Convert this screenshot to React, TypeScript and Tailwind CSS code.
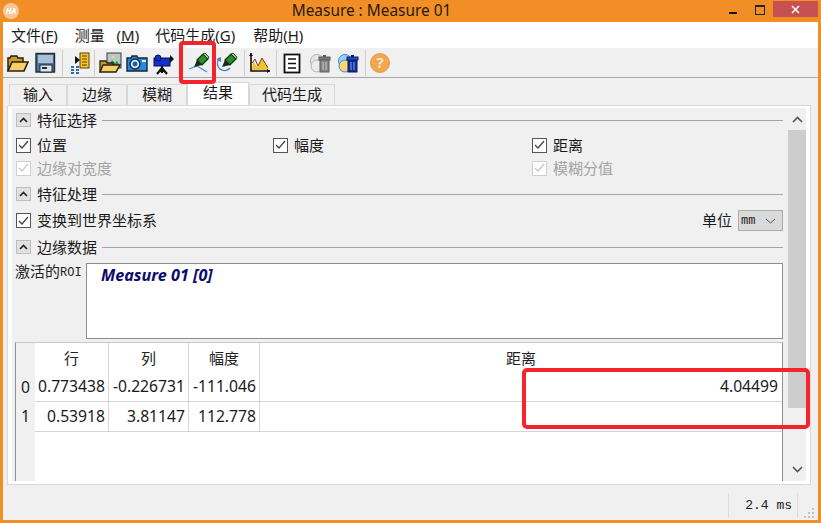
import type { ReactNode } from "react"

const cjk = "font-['Noto_Sans','Noto_Sans_CJK_SC',sans-serif]"
const mono = "font-['Liberation_Mono',monospace]"

function OpenIcon() {
  return (
    <svg width="24" height="24" viewBox="0 0 24 24">
      <path d="M3 20V7h2l1-2h6l1 2h5v4" fill="#c99a2e" stroke="#2a2110" strokeWidth="1.5" />
      <path d="M3 20l4-9h16l-4 9z" fill="#f6d066" stroke="#2a2110" strokeWidth="1.6" />
    </svg>
  )
}

function SaveIcon() {
  return (
    <svg width="24" height="24" viewBox="0 0 24 24">
      <rect x="4" y="2.5" width="18.5" height="18.5" fill="#4f7396" stroke="#1d2b3a" strokeWidth="1.4" />
      <rect x="6" y="4" width="15" height="8" fill="#a9bfd3" />
      <rect x="8" y="14" width="12" height="7" fill="#dde6ee" stroke="#1d2b3a" />
      <rect x="10" y="16" width="5" height="2" fill="#1d2b3a" />
    </svg>
  )
}

function RoiIcon() {
  return (
    <svg width="24" height="24" viewBox="0 0 24 24">
      <rect x="11" y="2" width="9" height="15" fill="#f4c52d" stroke="#5a4300" />
      <path d="M13 5h5M13 8h5M13 11h5M13 14h5" stroke="#5a4300" />
      <path d="M6 5l5 4-5 4z" fill="#111" />
      <g fill="#2f6db0">
        <rect x="2" y="15" width="3" height="2" />
        <rect x="7" y="15" width="3" height="2" />
        <rect x="2" y="18" width="3" height="2" />
        <rect x="7" y="18" width="3" height="2" />
        <rect x="2" y="21" width="3" height="2" />
        <rect x="7" y="21" width="3" height="2" />
      </g>
    </svg>
  )
}

function PictureFolderIcon() {
  return (
    <svg width="24" height="24" viewBox="0 0 24 24">
      <rect x="9" y="2" width="14" height="15" fill="#b9c4cf" stroke="#3d3d3d" />
      <path d="M10 16l4-7 3 3 2-2 4 6z" fill="#1f9a35" />
      <circle cx="15" cy="6" r="1.6" fill="#e9dc6f" />
      <path d="M2 21V10h6l1 2h6v3" fill="#c99a2e" stroke="#2a2110" strokeWidth="1.3" />
      <path d="M2 21l3-7h17l-4 7z" fill="#f6d066" stroke="#2a2110" strokeWidth="1.5" />
    </svg>
  )
}

function CameraIcon() {
  return (
    <svg width="24" height="24" viewBox="0 0 24 24">
      <path d="M3 7h4l1-2h5l1 2h9v13H3z" fill="#2a8ad8" stroke="#10263f" strokeWidth="1.4" />
      <circle cx="11" cy="13" r="5" fill="#cfe6f8" stroke="#10263f" strokeWidth="1.4" />
      <circle cx="11" cy="13" r="2.4" fill="#1b5f9e" />
      <rect x="18" y="9" width="4" height="2" fill="#d8ecfb" />
    </svg>
  )
}

function VideoIcon() {
  return (
    <svg width="24" height="24" viewBox="0 0 24 24">
      <rect x="3" y="7" width="16" height="8" fill="#1430c8" stroke="#071050" />
      <circle cx="7" cy="7" r="3" fill="#1430c8" stroke="#071050" />
      <path d="M19 4l4 4-4 4z" fill="#111" />
      <path d="M11 15v2M11 17l-5 6M11 17l5 6M11 17v5" stroke="#111" strokeWidth="2.2" />
    </svg>
  )
}

// small felt marker, tip at lower left
function Marker() {
  return (
    <g>
      <path d="M9 9l6-6 5 5-6 6z" fill="#2a8f2a" stroke="#0f300f" strokeWidth="1.2" />
      <path d="M15 3l2-1 4 4-1 2z" fill="#86d976" stroke="#0f300f" strokeWidth="0.8" />
      <path d="M9 9l5 5-8 2z" fill="#1e2a14" />
    </g>
  )
}

function PenLineIcon() {
  return (
    <svg width="24" height="24" viewBox="0 0 24 24">
      <path d="M1 18l8-3 10 6" fill="none" stroke="#4a90d9" strokeWidth="1.2" />
      <Marker />
    </svg>
  )
}

function PenCircleIcon() {
  return (
    <svg width="24" height="24" viewBox="0 0 24 24">
      <path d="M5 8a7 7 0 1 0 11 9" fill="none" stroke="#3f87d0" strokeWidth="1.4" />
      <path d="M2 8l5-2 0 5z" fill="#3f87d0" />
      <g transform="translate(2 0)">
        <Marker />
      </g>
    </svg>
  )
}

function ChartIcon() {
  return (
    <svg width="24" height="24" viewBox="0 0 24 24">
      <path d="M5 19l1-9 4 6 2-3 3-6 3 6 4 6z" fill="#f1c232" />
      <path d="M5 12l3-4 3 7 4-8 3 5 3 5" fill="none" stroke="#8c3b1e" />
      <path d="M4 2v18h19" fill="none" stroke="#111" strokeWidth="1.6" />
      <path d="M2 5l2-3 2 3zM20 18l3 2-3 2z" fill="#111" />
    </svg>
  )
}

function ListIcon() {
  return (
    <svg width="24" height="24" viewBox="0 0 24 24">
      <rect x="4.5" y="3.5" width="15" height="18" fill="#fff" stroke="#111" strokeWidth="1.8" />
      <path d="M8 8h8M8 12.5h8M8 17h8" stroke="#111" strokeWidth="1.6" />
    </svg>
  )
}

function TrashIcon({ color = false }: { color?: boolean }) {
  const body = color ? "#0f2f96" : "#858585"
  const edge = color ? "#0a1a5c" : "#5c5c5c"
  return (
    <svg width="24" height="24" viewBox="0 0 24 24">
      <circle cx="9" cy="10" r="6.5" fill={color ? "#9fd0f2" : "#e4e4e4"} stroke={color ? "#3b8edb" : "#b4b4b4"} />
      <circle cx="9" cy="15" r="6" fill={color ? "#f6d774" : "#ececec"} stroke={color ? "#3b8edb" : "#b4b4b4"} />
      <rect x="12" y="8" width="9" height="13" fill={body} stroke={edge} />
      <rect x="11" y="6" width="11" height="3" fill={color ? "#2450c0" : "#777"} stroke={edge} />
      <rect x="15" y="4" width="3" height="2" fill={edge} />
      <path d="M15 11v8M18 11v8" stroke={color ? "#7fa6ee" : "#c8c8c8"} />
    </svg>
  )
}

function Sep({ className }: { className: string }) {
  return <div className={`h-[26px] w-px bg-[#cfcfcf] ${className}`} />
}

function Tool({ className, children }: { className: string; children: ReactNode }) {
  return <div className={`flex h-6 w-6 items-center justify-center ${className}`}>{children}</div>
}

function MenuItem({ label, hot, className }: { label: string; hot: string; className: string }) {
  return (
    <span className={`text-[15px] whitespace-pre text-[#1a1a1a] ${className}`}>
      {label}(<span className="underline">{hot}</span>)
    </span>
  )
}

function Tab({ label, width, active }: { label: string; width: string; active?: boolean }) {
  return (
    <div
      className={`flex items-center justify-center border border-b-0 border-[#d9d9d9] text-[15px] text-[#1a1a1a] ${width} ${
        active ? "h-[23px] bg-white pb-[3px]" : "h-[21px] bg-[#f0f0f0] pb-px"
      }`}
    >
      {label}
    </div>
  )
}

function SectionHeader({ title, className }: { title: string; className: string }) {
  return (
    <div className={`ml-px flex items-center ${className}`}>
      <div className="flex h-[14px] w-[15px] items-center justify-center border border-[#bdbdbd] bg-[#e1e1e1]">
        <svg width="9" height="6" viewBox="0 0 9 6">
          <path d="M1 5l3.5-3.5L8 5" fill="none" stroke="#222" strokeWidth="1.6" />
        </svg>
      </div>
      <span className="ml-[6px] text-[15px] text-[#1a1a1a]">{title}</span>
      <div className="ml-[5px] h-px flex-1 bg-[#a6a6a6]" />
    </div>
  )
}

function Check({ label, disabled, width }: { label: string; disabled?: boolean; width?: string }) {
  return (
    <div className={`flex items-center ${width ?? ""}`}>
      <div
        className={`flex h-[15px] w-[15px] items-center justify-center border bg-white ${
          disabled ? "border-[#cfcfcf]" : "border-[#555]"
        }`}
      >
        <svg width="11" height="10" viewBox="0 0 11 10">
          <path d="M1 5l3 3 6-7" fill="none" stroke={disabled ? "#c8c8c8" : "#444"} strokeWidth="1.3" />
        </svg>
      </div>
      <span className={`ml-[6px] text-[15px] ${disabled ? "text-[#a3a3a3]" : "text-[#1a1a1a]"}`}>{label}</span>
    </div>
  )
}

const headCell = "flex items-center justify-center border-r border-[#d4d4d4] bg-white text-[15px] text-[#222]"
const numCell = "flex items-center justify-end border-b border-r border-[#d4d4d4] bg-white pr-[3px] text-[15.7px] text-[#1a1a1a]"
const rowHead = "flex items-center justify-center bg-[#f0f0f0] text-[15.7px] text-[#1a1a1a]"

const rows = [
  { id: "0", row: "0.773438", col: "-0.226731", amp: "-111.046", dist: "4.04499" },
  { id: "1", row: "0.53918", col: "3.81147", amp: "112.778", dist: "" },
]

export default function App() {
  return (
    <div className={`relative flex h-[523px] w-[821px] flex-col overflow-hidden bg-[#f18e26] ${cjk}`}>
      {/* title bar */}
      <div className="relative flex h-[22px] shrink-0 items-center justify-center pr-[78px] pb-px text-[15.4px] text-[#2b1a08]">
        <div className="absolute top-[3px] left-[3px] flex h-4 w-4 items-center justify-center rounded-full bg-[#f7c79a] text-[8px] font-bold text-white italic">
          HA
        </div>
        Measure : Measure 01
        <div className="absolute top-px right-[3px] flex items-start">
          <div className="mt-[11px] mr-[18px] h-[2px] w-2 bg-[#111]" />
          <div className="mt-1 mr-2 h-[10px] w-[10px] border border-t-2 border-[#222]" />
          <div className="flex h-4 w-[45px] items-center justify-center bg-[#c75050]">
            <svg width="9" height="9" viewBox="0 0 9 9">
              <path d="M1 1l7 7M8 1L1 8" stroke="#fff" strokeWidth="1.5" />
            </svg>
          </div>
        </div>
      </div>

      <div className="mx-[3px] flex flex-1 flex-col bg-[#f0f0f0]">
        {/* menu */}
        <div className="flex h-[26px] shrink-0 items-center bg-white">
          <MenuItem label="文件" hot="F" className="ml-2" />
          <MenuItem label="测量   " hot="M" className="ml-[17px]" />
          <MenuItem label="代码生成" hot="G" className="ml-4" />
          <MenuItem label="帮助" hot="H" className="ml-[18px]" />
        </div>

        {/* toolbar */}
        <div className="flex h-[30px] shrink-0 items-center border-b border-[#a8a8a8]">
          <Tool className="ml-[2px]"><OpenIcon /></Tool>
          <Tool className="ml-[3px]"><SaveIcon /></Tool>
          <Sep className="ml-[6px]" />
          <Tool className="ml-[6px]"><RoiIcon /></Tool>
          <Sep className="ml-px" />
          <Tool className="ml-[3px]"><PictureFolderIcon /></Tool>
          <Tool className="ml-[2px]"><CameraIcon /></Tool>
          <Tool className="ml-[3px]"><VideoIcon /></Tool>
          <Tool className="ml-[13px]"><PenLineIcon /></Tool>
          <Tool className="ml-[2px]"><PenCircleIcon /></Tool>
          <Sep className="ml-[6px]" />
          <Tool className="ml-[2px]"><ChartIcon /></Tool>
          <Sep className="ml-[5px]" />
          <Tool className="ml-[3px]"><ListIcon /></Tool>
          <Tool className="ml-1"><TrashIcon /></Tool>
          <Tool className="ml-1"><TrashIcon color /></Tool>
          <Sep className="ml-[5px]" />
          <Tool className="ml-[2px]">
            <div className="flex h-5 w-5 items-center justify-center rounded-full border border-[#e89a48] bg-[#f2a64f] text-[15px] font-bold text-[#fbe6cc]">
              ?
            </div>
          </Tool>
        </div>

        {/* tabs */}
        <div className="flex h-[27px] shrink-0 items-end pl-[6px]">
          <Tab label="输入" width="w-[58px]" />
          <Tab label="边缘" width="w-[60px]" />
          <Tab label="模糊" width="w-[60px]" />
          <Tab label="结果" width="w-[62px]" active />
          <Tab label="代码生成" width="w-[86px]" />
        </div>

        {/* tab page */}
        <div className="mr-[7px] ml-1 flex h-[380px] shrink-0 border border-[#d9d9d9] bg-white pt-[2px] pr-1 pb-[3px] pl-1">
          <div className="flex min-w-0 flex-1 flex-col bg-[#f0f0f0] pr-[5px] pl-[3px]">
            <SectionHeader title="特征选择" className="h-6 shrink-0" />
            <div className="ml-px flex h-[25px] shrink-0 items-center pt-px">
              <Check label="位置" width="w-[257px]" />
              <Check label="幅度" width="w-[259px]" />
              <Check label="距离" />
            </div>
            <div className="ml-px flex h-[22px] shrink-0 items-center">
              <Check label="边缘对宽度" disabled width="w-[516px]" />
              <Check label="模糊分值" disabled />
            </div>
            <SectionHeader title="特征处理" className="h-[30px] shrink-0" />
            <div className="ml-px flex h-[23px] shrink-0 items-center">
              <Check label="变换到世界坐标系" />
              <span className="mr-[6px] ml-auto text-[15px] text-[#1a1a1a]">单位</span>
              <div className="flex h-[21px] w-[45px] items-center justify-between border border-[#adadad] bg-[#dadada] pr-[6px] pl-[2px]">
                <span className={`text-[12px] text-[#222] ${mono}`}>mm</span>
                <svg width="11" height="6" viewBox="0 0 11 6">
                  <path d="M1 1l4.5 4L10 1" fill="none" stroke="#555" />
                </svg>
              </div>
            </div>
            <SectionHeader title="边缘数据" className="h-[30px] shrink-0" />
            <div className="mt-px flex h-[76px] shrink-0">
              <div className="flex h-4 w-[71px] shrink-0 items-center text-[15px] text-[#222]">
                激活的<span className={`mt-[3px] text-[12px] ${mono}`}>ROI</span>
              </div>
              <div className="flex-1 border border-[#8c8c8c] bg-white pl-[14px] text-[16.2px] leading-[22px] font-bold text-[#0c0c6e] italic">
                Measure 01 [0]
              </div>
            </div>

            {/* edge table */}
            <div className="mt-[3px] flex min-h-0 flex-1 flex-col border-x border-t border-x-[#8f8f8f] border-t-[#c8c8c8] bg-white">
              <div className="grid shrink-0 grid-cols-[19px_74px_80px_71px_1fr] grid-rows-[30px_29px_30px]">
                <div className="bg-[#f0f0f0]" />
                <div className={headCell}>行</div>
                <div className={headCell}>列</div>
                <div className={headCell}>幅度</div>
                <div className="flex items-center justify-center bg-white text-[15px] text-[#222]">距离</div>
                {rows.map((r) => (
                  <div key={r.id} className="contents">
                    <div className={rowHead}>{r.id}</div>
                    <div className={numCell}>{r.row}</div>
                    <div className={numCell}>{r.col}</div>
                    <div className={numCell}>{r.amp}</div>
                    <div className="flex items-center justify-end border-b border-[#d4d4d4] bg-white pr-1 text-[15.7px] text-[#1a1a1a]">
                      {r.dist}
                    </div>
                  </div>
                ))}
              </div>
              <div className="w-[19px] flex-1 bg-[#f0f0f0]" />
            </div>
          </div>

          {/* scrollbar */}
          <div className="flex w-[18px] shrink-0 flex-col bg-[#f0f0f0]">
            <div className="flex h-[22px] shrink-0 items-center justify-center">
              <svg width="11" height="7" viewBox="0 0 11 7">
                <path d="M1 6l4.5-4.5L10 6" fill="none" stroke="#555" strokeWidth="1.6" />
              </svg>
            </div>
            <div className="h-[278px] shrink-0 bg-[#cdcdcd]" />
            <div className="flex flex-1 items-end justify-center pb-[8px]">
              <svg width="11" height="7" viewBox="0 0 11 7">
                <path d="M1 1l4.5 4.5L10 1" fill="none" stroke="#555" strokeWidth="1.6" />
              </svg>
            </div>
          </div>
        </div>

        {/* status bar */}
        <div className="flex flex-1 items-end">
          <div className="mb-[2px] ml-auto flex h-[25px] w-[70px] items-center justify-end border-x border-[#dcdcdc] pr-[5px]">
            <span className={`text-[13px] text-[#222] ${mono}`}>2.4 ms</span>
          </div>
          <svg width="20" height="12" viewBox="0 0 20 12" className="mb-px">
            <g fill="#c2c2c2">
              <rect x="14" y="1" width="2" height="2" />
              <rect x="10" y="5" width="2" height="2" />
              <rect x="14" y="5" width="2" height="2" />
              <rect x="6" y="9" width="2" height="2" />
              <rect x="10" y="9" width="2" height="2" />
              <rect x="14" y="9" width="2" height="2" />
            </g>
          </svg>
        </div>
      </div>
      <div className="h-[3px] shrink-0" />

      {/* red annotations */}
      <div className="absolute top-[41px] left-[179px] h-[43px] w-[37px] rounded-[4px] border-4 border-[#f5242a]" />
      <div className="absolute top-[368px] left-[522px] h-[61px] w-[288px] rounded-[5px] border-4 border-[#f5242a]" />
    </div>
  )
}
